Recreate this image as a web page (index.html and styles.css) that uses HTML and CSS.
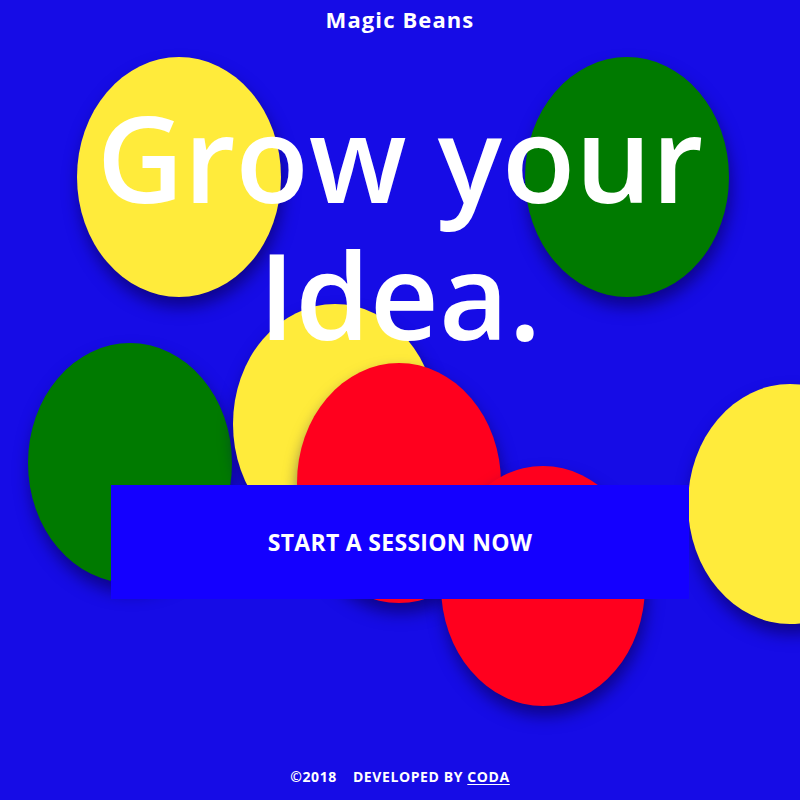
FILE: index.html
```html
<!DOCTYPE html>
<html>
<head>
<meta charset="utf-8">
<link rel="stylesheet" href="styles.css">
</head>
<body>
<div class="beans">
  <div class="bean yellow b1"></div>
  <div class="bean green b2"></div>
  <div class="bean green b3"></div>
  <div class="bean yellow b4"></div>
  <div class="bean red b5"></div>
  <div class="bean red b6"></div>
  <div class="bean yellow b7"></div>
</div>
<main class="page">
  <header class="brand">Magic Beans</header>
  <h1 class="title"><span class="line">Grow your</span><span class="line">Idea.</span></h1>
  <a class="cta" href="#">START A SESSION NOW</a>
  <footer class="foot"><span>©2018</span><span>DEVELOPED BY <u>CODA</u></span></footer>
</main>
</body>
</html>
```
FILE: styles.css
```css
html, body {
  margin: 0;
  padding: 0;
}
body {
  width: 800px;
  height: 800px;
  background: #160ce6;
  overflow: hidden;
  position: relative;
  font-family: "Open Sans", "DejaVu Sans", sans-serif;
  color: #fff;
}
.beans {
  position: absolute;
  inset: 0;
  overflow: hidden;
}
.bean {
  position: absolute;
  width: 204px;
  height: 240px;
  border-radius: 50%;
  box-shadow: 2px 10px 16px rgba(10, 0, 90, 0.65);
}
.yellow { background: #ffeb3b; }
.green { background: #007a00; }
.red { background: #ff001e; }
.b1 { left: 77px; top: 57px; }
.b2 { left: 525px; top: 57px; }
.b3 { left: 28px; top: 343px; }
.b4 { left: 233px; top: 304px; }
.b5 { left: 297px; top: 363px; }
.b6 { left: 441px; top: 466px; }
.b7 { left: 688px; top: 384px; }
.page {
  position: relative;
  height: 800px;
  display: flex;
  flex-direction: column;
  align-items: center;
}
.brand {
  margin-top: 5px;
  font-size: 22px;
  font-weight: 700;
  line-height: 28px;
  letter-spacing: 1.1px;
}
.title {
  margin: 55px 0 0;
  font-size: 120px;
  font-weight: 600;
  line-height: 137px;
  text-align: center;
  display: flex;
  flex-direction: column;
  align-items: center;
}
.line {
  display: block;
  height: 137px;
}
.cta {
  margin-top: 123px;
  width: 578px;
  height: 114px;
  background: #1400ff;
  color: #fff;
  text-decoration: none;
  display: flex;
  align-items: center;
  justify-content: center;
  font-size: 23px;
  font-weight: 700;
  letter-spacing: 0.3px;
}
.foot {
  margin-top: auto;
  margin-bottom: 14px;
  display: flex;
  gap: 16px;
  font-size: 14px;
  font-weight: 700;
  letter-spacing: 0.6px;
}
.foot u {
  text-underline-offset: 2px;
}
```
